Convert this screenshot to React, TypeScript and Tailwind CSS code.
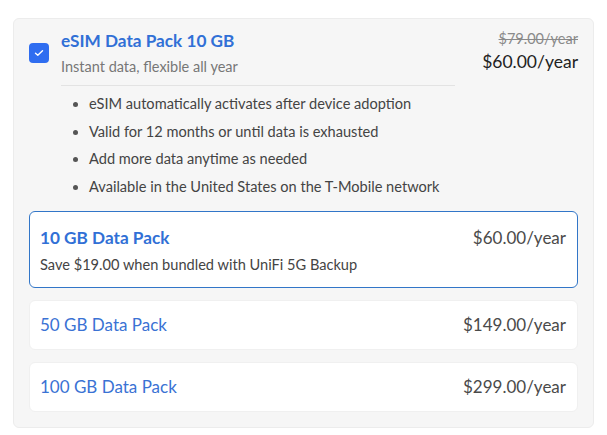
import React from 'react';

const features = [
  'eSIM automatically activates after device adoption',
  'Valid for 12 months or until data is exhausted',
  'Add more data anytime as needed',
  'Available in the United States on the T-Mobile network',
];

const packs = [
  { name: '50 GB Data Pack', price: '$149.00/year' },
  { name: '100 GB Data Pack', price: '$299.00/year' },
];

export default function App() {
  return (
    <div className="min-h-[435px] bg-white pl-[13px] pt-[18px] font-['Lato',sans-serif]">
      <div className="w-[581px] h-[410px] rounded-md bg-[#f6f6f6] border border-[#ececec] px-[15px] pt-[10px] pb-[15px] flex flex-col">
        {/* Header */}
        <div className="flex">
          <div className="mt-[14px] w-5 h-5 shrink-0 rounded-[4px] bg-[#2f6df0] flex items-center justify-center">
            <svg width="10" height="8" viewBox="0 0 10 8" fill="none">
              <path d="M1.5 4.2 L3.8 6.3 L8.5 1.7" stroke="white" strokeWidth="1.4" strokeLinecap="round" strokeLinejoin="round" />
            </svg>
          </div>
          <div className="ml-3 w-[394px]">
            <div className="text-[17.2px] leading-[24px] font-bold text-[#3170d6]">eSIM Data Pack 10 GB</div>
            <div className="mt-1 text-[14.5px] leading-[20px] text-[#777777]">Instant data, flexible all year</div>
            <div className="mt-2 h-px bg-[#e3e3e3]" />
          </div>
          <div className="flex-1 flex flex-col items-end">
            <div className="text-[14.5px] leading-[20px] text-[#8a8a8a] line-through">$79.00/year</div>
            <div className="mt-px text-[17.5px] leading-[24px] text-[#222222]">$60.00/year</div>
          </div>
        </div>

        <ul className="mt-1 ml-[32px] list-disc pl-[28px] text-[14.6px] leading-[27.5px] text-[#444444] marker:text-[#555555]">
          {features.map((f) => (
            <li key={f}>{f}</li>
          ))}
        </ul>

        {/* Packs */}
        <div className="mt-[11px] flex flex-col gap-3">
          <div className="h-[77px] rounded-md border border-[#3276c8] bg-white pl-[10px] pr-[11px] pt-[14px]">
            <div className="flex justify-between">
              <span className="text-[17.2px] leading-[24px] font-bold text-[#3170d6]">10 GB Data Pack</span>
              <span className="text-[17px] leading-[24px] text-[#4a4a4a]">$60.00/year</span>
            </div>
            <div className="mt-[5px] text-[14.6px] leading-[20px] text-[#444444]">Save $19.00 when bundled with UniFi 5G Backup</div>
          </div>
          {packs.map((p) => (
            <div key={p.name} className="h-[50px] rounded-md border border-[#f0f0f0] bg-white pl-[10px] pr-[11px] flex items-center justify-between">
              <span className="text-[17px] text-[#3a72d4]">{p.name}</span>
              <span className="text-[17px] text-[#4a4a4a]">{p.price}</span>
            </div>
          ))}
        </div>
      </div>
    </div>
  );
}
